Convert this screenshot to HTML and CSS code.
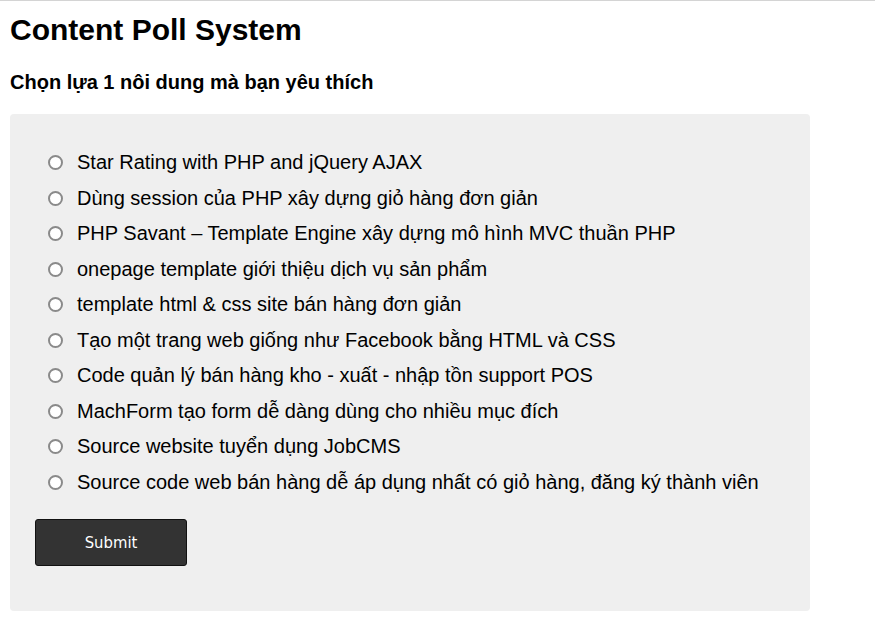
FILE: index.html
```html
<!DOCTYPE html>
<html lang="vi">
<head>
    <meta charset="UTF-8">
    <meta name="viewport" content="width=device-width, initial-scale=1.0">
    <title>Content Poll System</title>
    <link rel="stylesheet" href="styles.css">
</head>
<body>
    <h1>Content Poll System</h1>
    <h2>Chọn lựa 1 nôi dung mà bạn yêu thích</h2>

    <form class="poll-box">
        <label class="poll-item"><input type="radio" name="poll" value="1">Star Rating with PHP and jQuery AJAX</label>
        <label class="poll-item"><input type="radio" name="poll" value="2">Dùng session của PHP xây dựng giỏ hàng đơn giản</label>
        <label class="poll-item"><input type="radio" name="poll" value="3">PHP Savant – Template Engine xây dựng mô hình MVC thuần PHP</label>
        <label class="poll-item"><input type="radio" name="poll" value="4">onepage template giới thiệu dịch vụ sản phẩm</label>
        <label class="poll-item"><input type="radio" name="poll" value="5">template html &amp; css site bán hàng đơn giản</label>
        <label class="poll-item"><input type="radio" name="poll" value="6">Tạo một trang web giống như Facebook bằng HTML và CSS</label>
        <label class="poll-item"><input type="radio" name="poll" value="7">Code quản lý bán hàng kho - xuất - nhập tồn support POS</label>
        <label class="poll-item"><input type="radio" name="poll" value="8">MachForm tạo form dễ dàng dùng cho nhiều mục đích</label>
        <label class="poll-item"><input type="radio" name="poll" value="9">Source website tuyển dụng JobCMS</label>
        <label class="poll-item"><input type="radio" name="poll" value="10">Source code web bán hàng dễ áp dụng nhất có giỏ hàng, đăng ký thành viên</label>

        <button type="button" class="btn-submit">Submit</button>
    </form>
</body>
</html>
```

FILE: styles.css
```css
body {
    margin: 0;
    padding: 0 10px;
    border-top: 1px solid #d4d4d4;
    font-family: 'Liberation Sans', Arial, sans-serif;
    color: #000;
    background: #fff;
}

h1 {
    font-size: 30px;
    margin: 12px 0 0;
}

h2 {
    font-size: 20px;
    margin: 24px 0 0;
}

.poll-box {
    width: 800px;
    box-sizing: border-box;
    margin-top: 20px;
    padding: 31px 25px 45px;
    background: #efefef;
    border-radius: 4px;
}

.poll-item {
    display: flex;
    align-items: center;
    height: 35.5px;
    padding-left: 13px;
    font-size: 20px;
}

.poll-item input {
    appearance: none;
    -webkit-appearance: none;
    box-sizing: border-box;
    width: 15px;
    height: 15px;
    margin: 0 14px 0 0;
    border: 2px solid #8a8a8a;
    border-radius: 50%;
    background: #fff;
}

.poll-item input:checked {
    background: radial-gradient(circle, #333 0 3px, #fff 3.5px);
}

.btn-submit {
    display: block;
    width: 152px;
    height: 47px;
    margin-top: 19px;
    background: #333;
    color: #fff;
    border: 1px solid #111;
    border-radius: 3px;
    font-family: 'DejaVu Sans Condensed', 'DejaVu Sans', sans-serif;
    font-size: 16.5px;
    cursor: pointer;
}
```
